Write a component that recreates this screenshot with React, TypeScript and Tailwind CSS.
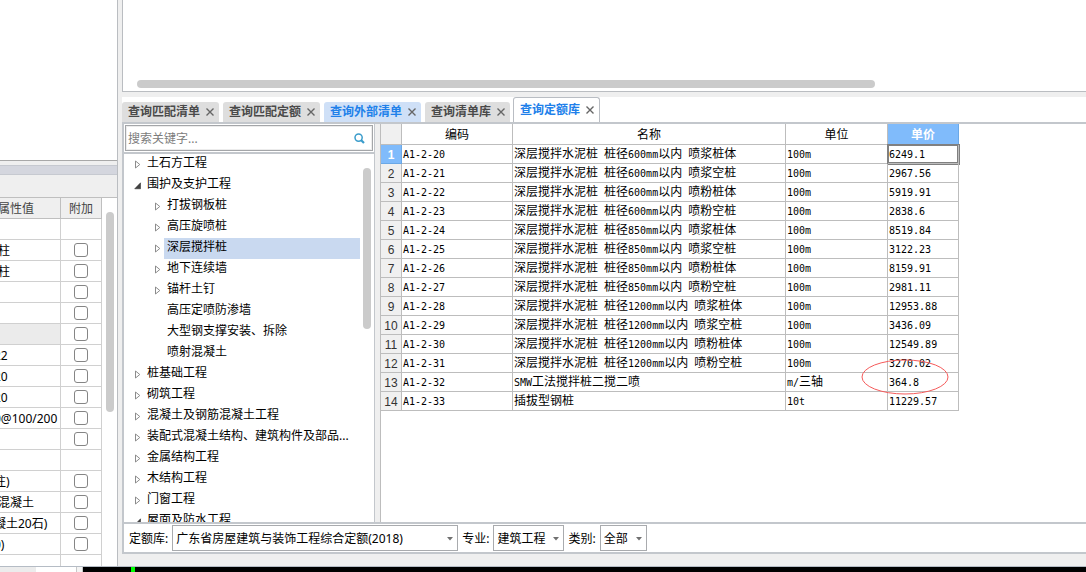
import { Fragment } from "react";

const tabs = [
  { label: "查询匹配清单", state: "idle" },
  { label: "查询匹配定额", state: "idle" },
  { label: "查询外部清单", state: "marked" },
  { label: "查询清单库", state: "idle" },
  { label: "查询定额库", state: "active" },
];

const tabStyles: Record<string, string> = {
  idle: "mr-1 h-5 rounded-t-[3px] bg-[#dedede] text-[#4a4a4a]",
  marked: "mr-1 h-5 rounded-t-[3px] bg-[#cfe0f7] text-[#2080ea]",
  active: "-ml-px h-[25px] rounded-t-[3px] border border-b-0 border-[#b9bdc3] bg-white text-[#2080ea]",
};

type Node = { label: string; depth: number; arrow: "closed" | "open" | "none"; selected?: boolean };

const tree: Node[] = [
  { label: "土石方工程", depth: 0, arrow: "closed" },
  { label: "围护及支护工程", depth: 0, arrow: "open" },
  { label: "打拔钢板桩", depth: 1, arrow: "closed" },
  { label: "高压旋喷桩", depth: 1, arrow: "closed" },
  { label: "深层搅拌桩", depth: 1, arrow: "closed", selected: true },
  { label: "地下连续墙", depth: 1, arrow: "closed" },
  { label: "锚杆土钉", depth: 1, arrow: "closed" },
  { label: "高压定喷防渗墙", depth: 1, arrow: "none" },
  { label: "大型钢支撑安装、拆除", depth: 1, arrow: "none" },
  { label: "喷射混凝土", depth: 1, arrow: "none" },
  { label: "桩基础工程", depth: 0, arrow: "closed" },
  { label: "砌筑工程", depth: 0, arrow: "closed" },
  { label: "混凝土及钢筋混凝土工程", depth: 0, arrow: "closed" },
  { label: "装配式混凝土结构、建筑构件及部品...", depth: 0, arrow: "closed" },
  { label: "金属结构工程", depth: 0, arrow: "closed" },
  { label: "木结构工程", depth: 0, arrow: "closed" },
  { label: "门窗工程", depth: 0, arrow: "closed" },
  { label: "屋面及防水工程", depth: 0, arrow: "open" },
];

const items = [
  ["A1-2-20", "深层搅拌水泥桩 桩径600mm以内 喷浆桩体", "100m", "6249.1"],
  ["A1-2-21", "深层搅拌水泥桩 桩径600mm以内 喷浆空桩", "100m", "2967.56"],
  ["A1-2-22", "深层搅拌水泥桩 桩径600mm以内 喷粉桩体", "100m", "5919.91"],
  ["A1-2-23", "深层搅拌水泥桩 桩径600mm以内 喷粉空桩", "100m", "2838.6"],
  ["A1-2-24", "深层搅拌水泥桩 桩径850mm以内 喷浆桩体", "100m", "8519.84"],
  ["A1-2-25", "深层搅拌水泥桩 桩径850mm以内 喷浆空桩", "100m", "3122.23"],
  ["A1-2-26", "深层搅拌水泥桩 桩径850mm以内 喷粉桩体", "100m", "8159.91"],
  ["A1-2-27", "深层搅拌水泥桩 桩径850mm以内 喷粉空桩", "100m", "2981.11"],
  ["A1-2-28", "深层搅拌水泥桩 桩径1200mm以内 喷浆桩体", "100m", "12953.88"],
  ["A1-2-29", "深层搅拌水泥桩 桩径1200mm以内 喷浆空桩", "100m", "3436.09"],
  ["A1-2-30", "深层搅拌水泥桩 桩径1200mm以内 喷粉桩体", "100m", "12549.89"],
  ["A1-2-31", "深层搅拌水泥桩 桩径1200mm以内 喷粉空桩", "100m", "3270.02"],
  ["A1-2-32", "SMW工法搅拌桩二搅二喷", "m/三轴", "364.8"],
  ["A1-2-33", "插拔型钢桩", "10t", "11229.57"],
];

type Prop = { value: string; check: boolean; shaded?: boolean };

const props: Prop[] = [
  { value: "", check: false },
  { value: "柱", check: true },
  { value: "柱", check: true },
  { value: "", check: true },
  { value: "", check: true },
  { value: "", check: true, shaded: true },
  { value: "22", check: true },
  { value: "20", check: true },
  { value: "20", check: true },
  { value: "0@100/200", check: true },
  { value: "", check: true },
  { value: "", check: false },
  { value: "注)", check: true },
  { value: "混凝土", check: true },
  { value: "凝土20石)", check: true },
  { value: "0)", check: true },
  { value: "", check: false },
];

/* Latin runs use a half-width monospaced face beside the full-width characters. */
function GridText({ text }: { text: string }) {
  return (
    <>
      {text.split(/([\x20-\x7e]+)/).map((run, i) =>
        i % 2 ? (
          <span key={i} className="whitespace-pre font-['DejaVu_Sans_Mono',monospace] text-[10px]">
            {run}
          </span>
        ) : (
          <Fragment key={i}>{run}</Fragment>
        ),
      )}
    </>
  );
}

function TreeArrow({ kind }: { kind: Node["arrow"] }) {
  return (
    <svg viewBox="0 0 8 9" className="h-[9px] w-2 shrink-0" aria-hidden="true">
      {kind === "closed" && <path d="M1.5 1v7L5.8 4.5z" fill="#fff" stroke="#8c8c8c" />}
      {kind === "open" && <path d="M6.5 1.8v6H.7z" fill="#404040" stroke="#222" strokeWidth=".5" />}
    </svg>
  );
}

function Picker({ id, label, value, width }: { id: string; label: string; value: string; width: string }) {
  return (
    <>
      <label htmlFor={id} className="shrink-0 pt-0.5">
        {label}
      </label>
      <div className={`relative ${width}`}>
        <select
          id={id}
          className="block h-[26px] w-full appearance-none border border-[#a9abae] bg-white pl-[3px] pt-0.5 text-xs text-black outline-none"
        >
          <option>{value}</option>
        </select>
        <svg viewBox="0 0 6 4" className="pointer-events-none absolute right-[5px] top-[12px] h-1 w-1.5" aria-hidden="true">
          <path d="M0 0h6L3 3.5z" fill="#707070" />
        </svg>
      </div>
    </>
  );
}

function PropertyPanel() {
  return (
    <aside className="flex w-[118px] shrink-0 flex-col border-r border-[#babdc1]">
      <div className="h-[161px] shrink-0 border-b border-[#a8a8a8] bg-white" />
      <div className="mt-1 h-[10px] shrink-0 border-y border-[#c6c9d0] bg-[#d4d6de]" />
      <div className="h-[22px] shrink-0" />
      <div className="flex min-h-0 flex-1 border-t border-[#bfbfbf] bg-white">
        <div className="w-[102px] overflow-hidden">
          <table className="w-full table-fixed border-separate border-spacing-0">
            <thead>
              <tr className="h-[21px] bg-[#efefef] text-[#444]">
                <th className="w-[61px] border-b border-r border-[#bfbfbf] p-0 text-left font-normal">
                  <span className="-ml-0.5 block whitespace-nowrap pt-0.5 leading-[18px]">属性值</span>
                </th>
                <th className="border-b border-r border-[#bfbfbf] p-0 pt-0.5 font-normal leading-[18px]">附加</th>
              </tr>
            </thead>
            <tbody>
              {props.map((p, i) => (
                <tr key={i} className="h-[21px]">
                  <td className={`overflow-hidden border-b border-r border-[#d0d0d0] p-0 ${p.shaded ? "bg-[#ebebeb]" : ""}`}>
                    <span
                      className={`block whitespace-nowrap pt-0.5 leading-[18px] ${/^[柱混]/.test(p.value) ? "-ml-0.5" : "-ml-1.5"}`}
                    >
                      {p.value}
                    </span>
                  </td>
                  <td className="border-b border-r border-[#d0d0d0] p-0">
                    {p.check && (
                      <input
                        type="checkbox"
                        aria-label="附加"
                        className="mx-auto block size-3.5 appearance-none rounded-[3px] border border-[#858585] bg-white"
                      />
                    )}
                  </td>
                </tr>
              ))}
            </tbody>
          </table>
        </div>
        <div className="mt-3.5 ml-1 h-[200px] w-2 rounded-full bg-[#cbcbcb]" />
      </div>
    </aside>
  );
}

function TreePanel() {
  return (
    <section className="flex w-[253px] shrink-0 flex-col border-l-2 border-r border-[#c3c7cc] bg-white">
      <div className="border-b-2 border-[#c3c7cc] p-px">
        <div className="flex h-[26px] items-center border border-[#a4a6a9] pr-[7px] shadow-[inset_0_0_0_1px_#ececec]">
          <input
            type="text"
            aria-label="搜索关键字"
            placeholder="搜索关键字..."
            className="min-w-0 flex-1 bg-transparent pl-0.5 pt-0.5 text-xs outline-none placeholder:text-[#7c7c7c]"
          />
          <svg viewBox="0 0 11 11" className="size-[11px]" fill="none" stroke="#3a9ccb" aria-hidden="true">
            <circle cx="4.6" cy="4.6" r="3.6" strokeWidth="1.5" />
            <path d="M7 7l3 3" strokeWidth="2.2" />
          </svg>
        </div>
      </div>
      <div className="flex min-h-0 flex-1">
        <ul className="w-[236px] overflow-hidden">
          {tree.map((n) => (
            <li key={n.label} className={`flex h-[21px] items-center ${n.depth ? "pl-[30px]" : "pl-2.5"}`}>
              <TreeArrow kind={n.arrow} />
              <button
                type="button"
                className={`ml-0.5 h-full min-w-0 flex-1 whitespace-nowrap pb-1 pl-[3px] text-left leading-[17px] ${n.selected ? "bg-[#c9d9f0]" : ""}`}
              >
                {n.label}
              </button>
            </li>
          ))}
        </ul>
        <div className="mt-3.5 ml-[3px] h-[161px] w-2 rounded-full bg-[#cbcbcb]" />
      </div>
    </section>
  );
}

function QuotaGrid() {
  return (
    <section className="relative min-w-0 flex-1 overflow-hidden border-l border-[#bdbdbd] bg-white">
      <table className="w-[578px] table-fixed border-separate border-spacing-0 text-black">
        <thead>
          <tr className="h-[21px]">
            <th className="w-[21px] border-b border-r border-[#bdbdbd] bg-[#f0f0f0] p-0" />
            <th className="w-[111px] border-b border-r border-[#bdbdbd] p-0 pt-0.5 font-normal leading-[18px]">编码</th>
            <th className="w-[273px] border-b border-r border-[#bdbdbd] p-0 pt-0.5 font-normal leading-[18px]">名称</th>
            <th className="w-[102px] border-b border-r border-[#bdbdbd] p-0 pt-0.5 font-normal leading-[18px]">单位</th>
            <th className="border-b border-r border-[#6ba8e6] bg-[#80bbfb] p-0 pt-0.5 font-bold leading-[18px] text-white">单价</th>
          </tr>
        </thead>
        <tbody>
          {items.map((row, i) => (
            <tr key={row[0]} className="h-[19px]">
              <th
                className={`border-b border-r p-0 pt-0.5 font-['Liberation_Sans',sans-serif] leading-4 ${i ? "border-[#bdbdbd] bg-[#f0f0f0] font-normal text-[#333]" : "border-[#6ba8e6] bg-[#80bbfb] font-bold text-white"}`}
              >
                {i + 1}
              </th>
              {row.map((cell, c) => (
                <td
                  key={c}
                  className={`overflow-hidden whitespace-nowrap border-b border-r border-[#bdbdbd] p-0 pl-px leading-4 ${!i && c === 3 ? "shadow-[inset_0_0_0_1px_#808080,0_0_0_1px_#808080]" : ""}`}
                >
                  <GridText text={cell} />
                </td>
              ))}
            </tr>
          ))}
        </tbody>
      </table>
      <svg viewBox="0 0 88 36" className="absolute left-[480px] top-[235px] h-9 w-[88px]" aria-hidden="true">
        <ellipse cx="44" cy="18" rx="43" ry="17" fill="none" stroke="#f55a5a" />
      </svg>
    </section>
  );
}

export default function App() {
  return (
    <div className="flex h-screen flex-col overflow-hidden bg-[#efefef] font-['Noto_Sans','Noto_Sans_CJK_SC',sans-serif] text-xs text-black">
      <main className="flex min-h-0 flex-1 border-b border-[#b5bcc5]">
        <PropertyPanel />
        <div className="ml-1 flex min-w-0 flex-1 flex-col">
          <div className="flex h-[92px] shrink-0 flex-col justify-end border-b border-l border-[#babdc1] bg-white pb-[3px] pl-3.5">
            <div className="h-2 w-[738px] rounded-full bg-[#cbcbcb]" />
          </div>
          <div role="tablist" className="mt-[5px] flex h-[25px] shrink-0 items-end bg-white">
            {tabs.map((t) => (
              <div key={t.label} className={`flex items-center pl-1.5 pr-1 ${tabStyles[t.state]}`}>
                <button type="button" role="tab" aria-selected={t.state === "active"} className="font-bold leading-5">
                  {t.label}
                </button>
                <button type="button" aria-label={`关闭${t.label}`} className="ml-[5px] p-px">
                  <svg viewBox="0 0 8 8" className="size-2" stroke="#666" strokeWidth="1.4" aria-hidden="true">
                    <path d="M.5.5l7 7M7.5.5l-7 7" />
                  </svg>
                </button>
              </div>
            ))}
          </div>
          <div className="flex min-h-0 flex-1 border-t-2 border-[#c3c7cc]">
            <TreePanel />
            <div className="w-[5px] shrink-0" />
            <QuotaGrid />
          </div>
          <div className="mb-3 flex h-[32px] shrink-0 items-center gap-1 border-y-2 border-l-2 border-[#c3c7cc] bg-white pl-[5px]">
            <Picker id="library" label="定额库:" value="广东省房屋建筑与装饰工程综合定额(2018)" width="w-[286px]" />
            <Picker id="major" label="专业:" value="建筑工程" width="w-[71px]" />
            <Picker id="kind" label="类别:" value="全部" width="w-[47px]" />
          </div>
        </div>
      </main>
      <footer className="flex h-[5px] shrink-0 bg-black">
        <div className="w-9 bg-[#ececec]" />
        <div className="w-10 bg-white" />
        <div className="w-[7px] border-x border-[#c8c8c8] bg-[#f4f4f4]" />
        <div className="ml-12 w-1 bg-[#00ff00]" />
      </footer>
    </div>
  );
}
